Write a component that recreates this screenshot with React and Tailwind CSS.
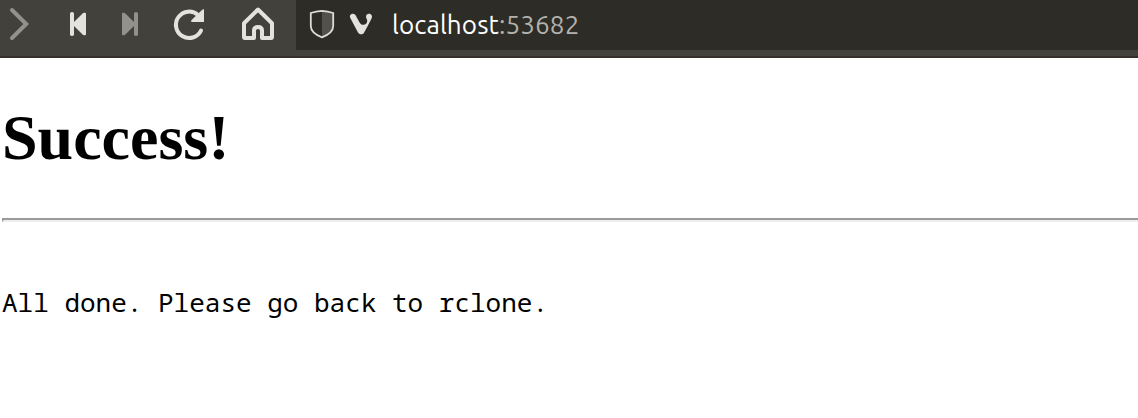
function Toolbar() {
  return (
    <header className="flex h-[58px] border-b-2 border-[#342e2c] bg-[#42413c]">
      <nav className="flex w-[296px] shrink-0">
        <svg width="296" height="56" viewBox="0 0 296 56" fill="none" strokeLinecap="round" strokeLinejoin="round">
          <path d="M12 10 26.2 24 12 38" stroke="#92918b" strokeWidth="4" strokeLinejoin="miter" />
          <g fill="#e3e2dc">
            <rect x="70" y="12" width="4" height="24" rx="1.8" />
            <path d="M73.5 22.6 82.6 13.4Q83.2 12.8 84 12.8H85Q86 12.8 86 14V34Q86 35.2 85 35.2H84Q83.2 35.2 82.6 34.6L73.5 25.4Z" />
          </g>
          <g fill="#92918b">
            <rect x="134" y="12" width="4" height="24" rx="1.8" />
            <path d="M134.5 22.6 125.4 13.4Q124.8 12.8 124 12.8H123Q122 12.8 122 14V34Q122 35.2 123 35.2H124Q124.8 35.2 125.4 34.6L134.5 25.4Z" />
          </g>
          <path d="M198 15A13.2 13.2 0 1 0 201 30.6" stroke="#e3e2dc" strokeWidth="4" />
          <path d="M204 9.5V22H192C190.8 22 190.8 20.8 191.6 20L202.5 9.6Q203.4 8.8 204 9.5Z" fill="#e3e2dc" />
          <path d="M258 9.5 244 23.2V37Q244 38 245 38H254V30.5Q254 27 258 27T262 30.5V38H271Q272 38 272 37V23.2Z" stroke="#e3e2dc" strokeWidth="4" />
        </svg>
      </nav>
      <div className="flex h-[50px] flex-1 bg-[#2e2c27]">
        <svg className="shrink-0" width="96" height="50" viewBox="296 0 96 50" fill="none">
          <path d="M322 11 333 13V26C333 31 328 35 322 37.2Z" fill="#53514d" />
          <path d="M322 10.8Q316 11.4 310.8 13V26C310.8 31.5 316 35 322 37.3C328 35 333.2 31.5 333.2 26V13Q328 11.4 322 10.8Z" stroke="#dddcd6" strokeWidth="1.8" />
          <path d="M350.3 18C349 15.4 351 13.8 352.8 13.8C354.4 13.8 355.3 14.7 356 16L359 21.4C360.2 23.5 361.3 24.8 363.3 24.8C365.8 24.8 367.4 22.8 367.2 20.5C367.1 19.1 366 18.2 366 16.7C366 15 367.4 13.8 369 13.8C371 13.8 372.6 15.6 371.8 17.7C370.7 20.5 367 27.4 364 32.7C362.7 34.8 359.3 34.8 358 32.5Z" fill="#e3e2dc" />
        </svg>
        <div className="flex h-[50px] items-center whitespace-nowrap font-['Ubuntu','Noto_Sans',sans-serif] text-[26px] leading-[50px] tracking-[0.13px]">
          <span className="text-white">localhost</span>
          <span className="text-[#b3b2ac]">:53682</span>
        </div>
      </div>
    </header>
  );
}

export default function App() {
  return (
    <div className="h-[418px] overflow-hidden bg-white text-black">
      <Toolbar />
      <main className="pl-[2px]">
        <h1 className="pt-[43px] font-['Liberation_Serif',serif] text-[64px] leading-[74px] font-bold">Success!</h1>
        <hr className="mt-[43px] h-[4px] border-2 border-r-0 border-t-[#9a9a9a] border-b-[#eeeeee] border-l-[#9a9a9a]" />
        <pre className="pt-[62px] font-['Noto_Sans_Mono','Noto_Sans_Mono_CJK_SC','DejaVu_Sans_Mono',monospace] text-[26px] leading-[36px]">
          All done. Please go back to rclone.
        </pre>
      </main>
    </div>
  );
}
